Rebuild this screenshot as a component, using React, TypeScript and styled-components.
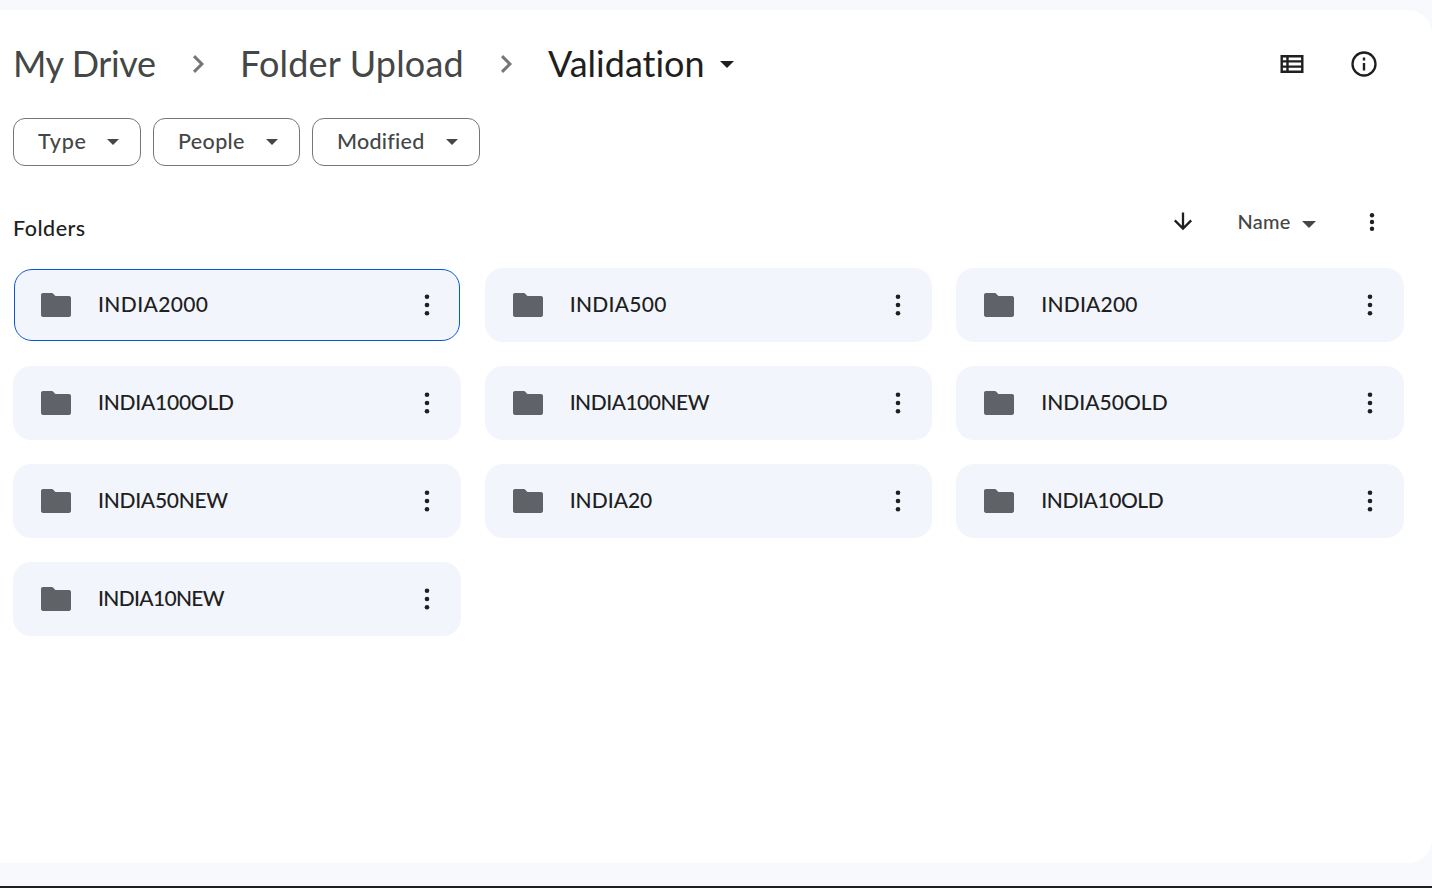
import React from 'react';
import styled, { createGlobalStyle } from 'styled-components';

const GlobalStyle = createGlobalStyle`
  * { box-sizing: border-box; }
  body {
    margin: 0;
    background: #f8f9fd;
    font-family: Lato, 'Liberation Sans', sans-serif;
    font-variant-ligatures: none;
    color: #1f1f1f;
  }
  button { font: inherit; color: inherit; background: none; border: 0; padding: 0; margin: 0; }
  svg { display: block; flex: none; }
`;

const Page = styled.div`
  height: 888px;
  padding: 10px 0 23px;
  border-bottom: 2px solid #1f1f1f;
  overflow: hidden;
`;

const Panel = styled.main`
  height: 853px;
  background: #fff;
  border-radius: 0 24px 24px 0;
  padding: 24px 28px 0 13px;
`;

const Header = styled.header`
  display: flex;
  align-items: center;
  justify-content: space-between;
  height: 60px;
`;

const Breadcrumbs = styled.nav`
  display: flex;
  align-items: center;
`;

const Crumb = styled.button<{ $current?: boolean; $width: number; $spacing?: number }>`
  width: ${p => p.$width}px;
  padding-bottom: 2px;
  font-size: 36px;
  line-height: 48px;
  text-align: left;
  white-space: nowrap;
  letter-spacing: ${p => p.$spacing ?? 0}px;
  color: ${p => (p.$current ? '#1f1f1f' : '#444746')};
`;

const Separator = styled.span`
  width: 85px;
  padding-left: 1px;
  display: flex;
  justify-content: center;
`;

const Actions = styled.div`
  display: flex;
  align-items: center;
  gap: 36px;
  padding-right: 22px;
`;

const Filters = styled.div`
  display: flex;
  gap: 12px;
  margin-top: 24px;
`;

const Chip = styled.button<{ $width: number; $spacing?: number }>`
  display: flex;
  align-items: center;
  justify-content: space-between;
  width: ${p => p.$width}px;
  height: 48px;
  padding: 0 21px 0 24px;
  border: 1px solid #747775;
  border-radius: 12px;
  font-size: 21.5px;
  font-weight: 500;
  letter-spacing: ${p => p.$spacing ?? 0}px;
  color: #444746;
`;

const ChipLabel = styled.span`
  padding-bottom: 2px;
`;

const SectionBar = styled.div`
  display: flex;
  justify-content: space-between;
  height: 102px;
`;

const SectionTitle = styled.h2`
  margin: 48px 0 0;
  font-size: 21.5px;
  line-height: 28px;
  font-weight: 500;
  letter-spacing: 0.5px;
`;

const SortControls = styled.div`
  display: flex;
  align-items: center;
  height: 36px;
  margin-top: 38px;
  padding-right: 14.5px;
`;

const SortField = styled.button`
  display: flex;
  align-items: center;
  justify-content: space-between;
  width: 78px;
  margin: 0 38px 0 37px;
  font-size: 20px;
  font-weight: 500;
  letter-spacing: 0.2px;
  color: #444746;

  span { padding-bottom: 2px; }
  svg { margin-top: 4px; }
`;

const FolderGrid = styled.section`
  display: grid;
  grid-template-columns: repeat(3, 1fr);
  grid-auto-rows: 74px;
  gap: 24px;
`;

const FolderCard = styled.article<{ $selected?: boolean }>`
  display: flex;
  align-items: center;
  background: #f2f5fc;
  border-radius: 18px;
  padding: ${p => (p.$selected ? '0 14px 0 23px' : '0 16px 0 25px')};
  margin: ${p => (p.$selected ? '1px' : '0')};
  border: ${p => (p.$selected ? '1px solid #0b57d0' : '0')};
`;

const FolderName = styled.span<{ $spacing: number }>`
  flex: 1;
  margin-left: 24px;
  padding-bottom: 2px;
  font-size: 21px;
  font-weight: 500;
  line-height: 28px;
  letter-spacing: ${p => p.$spacing}px;
`;

const FolderIcon = () => (
  <svg width="36" height="36" viewBox="0 0 24 24" fill="#5f6368">
    <path d="M9.2 4H3.3C2.6 4 2 4.6 2 5.3v13.4c0 .7.6 1.3 1.3 1.3h17.4c.7 0 1.3-.6 1.3-1.3V7.3c0-.7-.6-1.3-1.3-1.3H11.6L10.2 4.5C9.9 4.2 9.6 4 9.2 4z" />
  </svg>
);

const MoreIcon = ({ gap = 8.2, r = 2.3 }: { gap?: number; r?: number }) => (
  <svg width="36" height="36" viewBox="0 0 36 36" fill="#1f1f1f">
    {[-1, 0, 1].map(i => <circle key={i} cx="18" cy={18 + i * gap} r={r} />)}
  </svg>
);

const Caret = ({ w = 12, h = 6, color = '#444746' }: { w?: number; h?: number; color?: string }) => (
  <svg width={w} height={h} viewBox="0 0 12 6" preserveAspectRatio="none" fill={color}>
    <path d="M0 0h12L6 6z" />
  </svg>
);

const Chevron = () => (
  <svg width="11" height="18" viewBox="8.59 6 7.41 12" fill="#747775">
    <path d="M10 6 8.59 7.41 13.17 12l-4.58 4.59L10 18l6-6z" />
  </svg>
);

const folders: { name: string; spacing: number }[] = [
  { name: 'INDIA2000', spacing: 0.38 },
  { name: 'INDIA500', spacing: 0.28 },
  { name: 'INDIA200', spacing: 0.2 },
  { name: 'INDIA100OLD', spacing: -0.25 },
  { name: 'INDIA100NEW', spacing: -0.5 },
  { name: 'INDIA50OLD', spacing: 0 },
  { name: 'INDIA50NEW', spacing: -0.28 },
  { name: 'INDIA20', spacing: 0 },
  { name: 'INDIA10OLD', spacing: -0.44 },
  { name: 'INDIA10NEW', spacing: -0.67 },
];

export default function App() {
  return (
    <Page>
      <GlobalStyle />
      <Panel>
        <Header>
          <Breadcrumbs>
            <Crumb $width={142} $spacing={-0.4}>My Drive</Crumb>
            <Separator><Chevron /></Separator>
            <Crumb $width={223} $spacing={0.18}>Folder Upload</Crumb>
            <Separator><Chevron /></Separator>
            <Crumb $current $width={172}>Validation</Crumb>
            <Caret w={14} h={7} color="#1f1f1f" />
          </Breadcrumbs>
          <Actions>
            <svg width="36" height="36" viewBox="0 0 36 36" fill="none" stroke="#1f1f1f" strokeWidth="2.4">
              <path d="M7.7 10.2h20.6v15.6H7.7zM13.5 10v16M7 15.4h22M7 20.6h22" />
            </svg>
            <svg width="36" height="36" viewBox="0 0 36 36" fill="none" stroke="#1f1f1f" strokeWidth="2.3">
              <circle cx="18" cy="18" r="11.5" />
              <path d="M18 17v7.5M18 11.6v2.8" strokeWidth="2.4" />
            </svg>
          </Actions>
        </Header>
        <Filters>
          <Chip $width={128} $spacing={0.8}><ChipLabel>Type</ChipLabel><Caret /></Chip>
          <Chip $width={147} $spacing={0.35}><ChipLabel>People</ChipLabel><Caret /></Chip>
          <Chip $width={168} $spacing={0.25}><ChipLabel>Modified</ChipLabel><Caret /></Chip>
        </Filters>
        <SectionBar>
          <SectionTitle>Folders</SectionTitle>
          <SortControls>
            <svg width="36" height="36" viewBox="0 0 36 36" fill="none" stroke="#1f1f1f" strokeWidth="2.3">
              <path d="M18 8.5v16.3M9.8 16.4l8.2 8.2 8.2-8.2" />
            </svg>
            <SortField><span>Name</span><Caret w={14} h={7} /></SortField>
            <MoreIcon gap={6.8} r={2.2} />
          </SortControls>
        </SectionBar>
        <FolderGrid>
          {folders.map((f, i) => (
            <FolderCard key={f.name} $selected={i === 0}>
              <FolderIcon />
              <FolderName $spacing={f.spacing}>{f.name}</FolderName>
              <MoreIcon />
            </FolderCard>
          ))}
        </FolderGrid>
      </Panel>
    </Page>
  );
}
